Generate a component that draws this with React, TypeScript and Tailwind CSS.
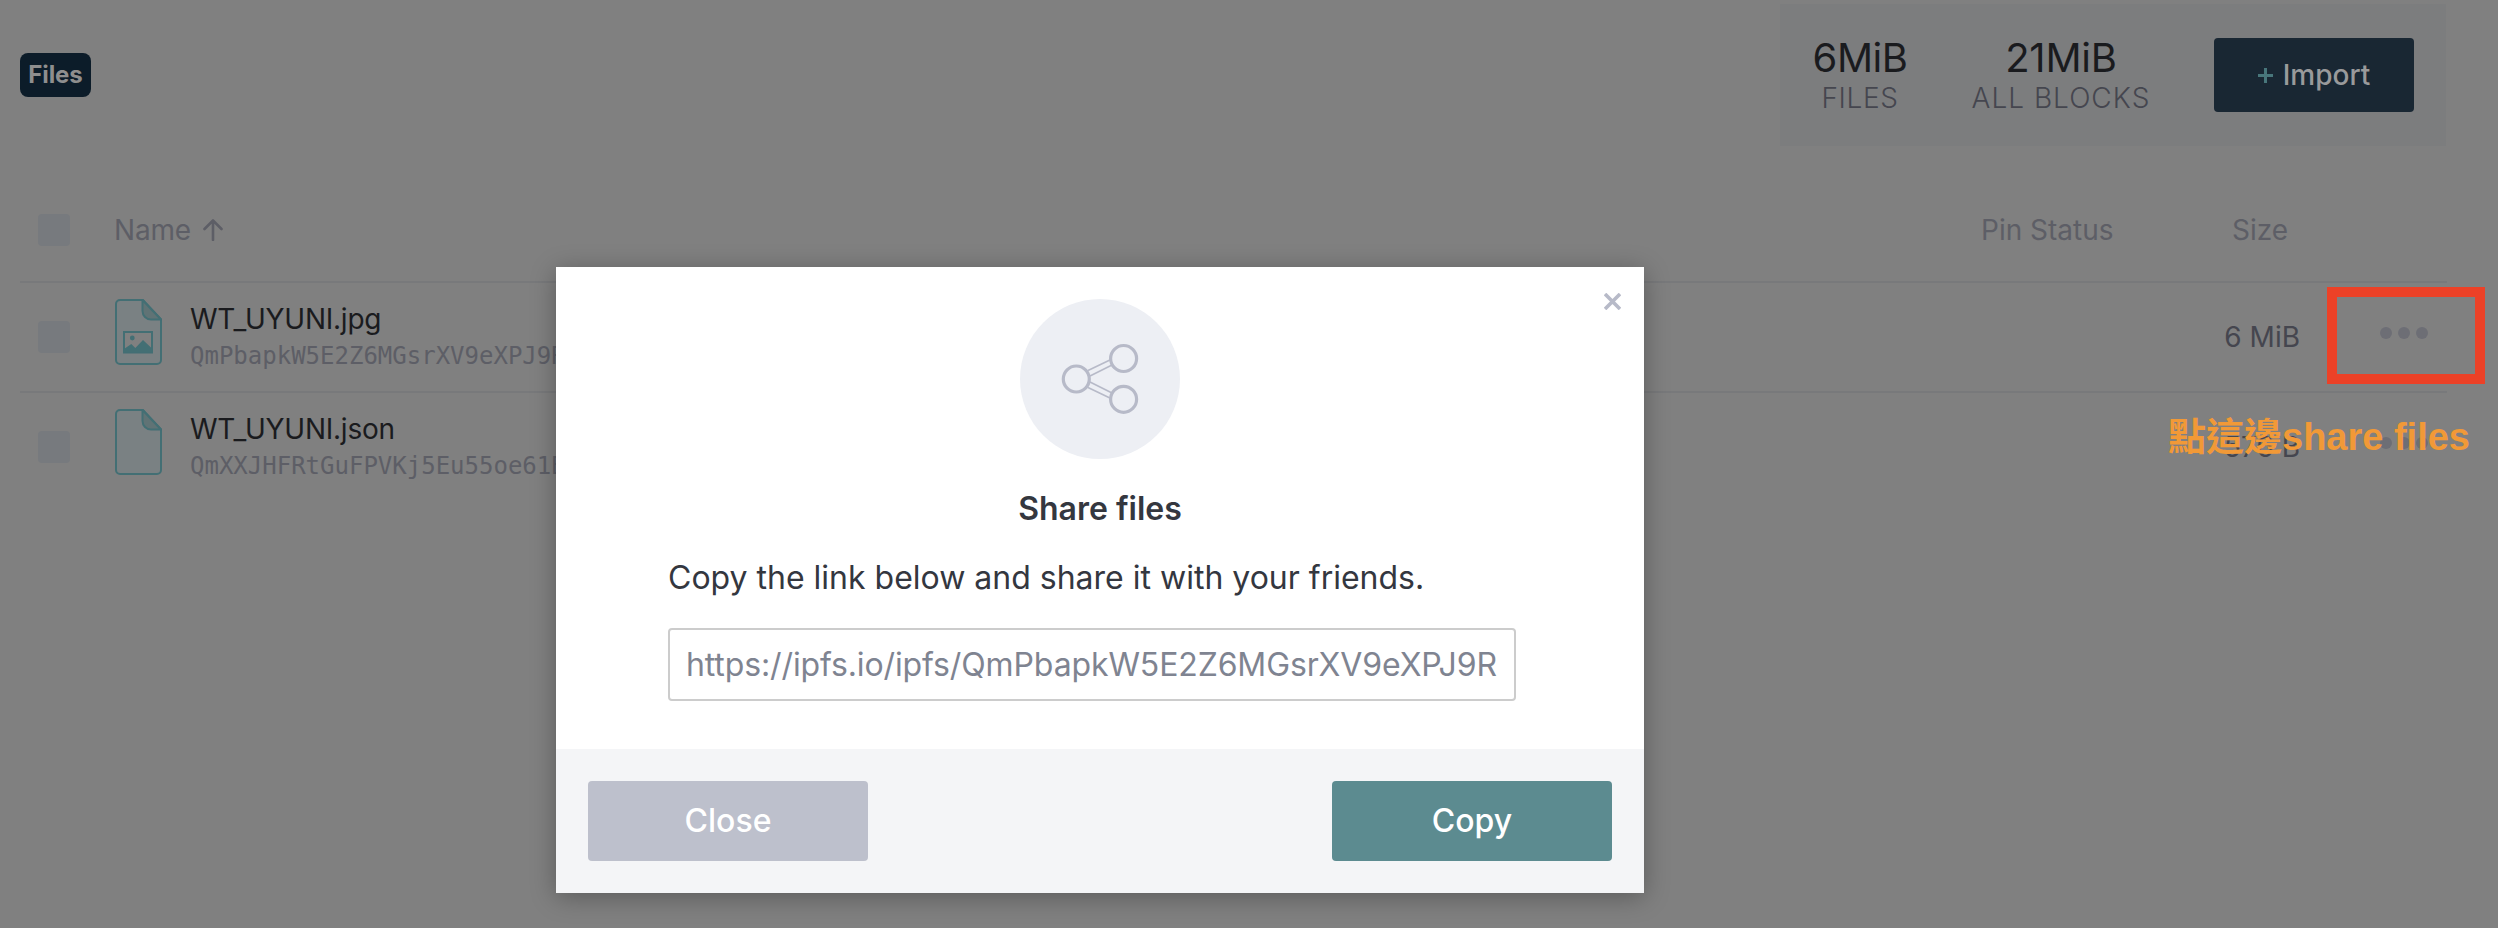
import React from "react";

const rows = [
  { name: "WT_UYUNI.jpg", cid: "QmPbapkW5E2Z6MGsrXV9eXPJ9R", size: "6 MiB", image: true },
  { name: "WT_UYUNI.json", cid: "QmXXJHFRtGuFPVKj5Eu55oe61B", size: "576 B", image: false },
];

function Checkbox() {
  return <span className="h-8 w-8 rounded-[4px] bg-[#777a7e]" />;
}

function FileIcon({ image }: { image: boolean }) {
  return (
    <svg className="h-[66px] w-[47px]" viewBox="0 0 47 66" fill="none">
      <path d="M28 1H5a4 4 0 0 0-4 4v56a4 4 0 0 0 4 4h37a4 4 0 0 0 4-4V20.500Z" fill="#7a8183" stroke="#436f74" strokeWidth="2" />
      <path d="M27.500 1v11a8.500 8.500 0 0 0 8.500 8.500h10Z" fill="#607375" stroke="#436f74" strokeWidth="2" strokeLinejoin="round" />
      {image && (
        <g>
          <rect x="9" y="33" width="28" height="20.500" stroke="#436f74" strokeWidth="2" fill="#808080" />
          <circle cx="17.300" cy="39" r="2.400" fill="#436f74" />
          <path d="M9 53.500V50l7.300-5 4 4L28 41l9 8.500v4Z" fill="#436f74" />
        </g>
      )}
    </svg>
  );
}

function Dots() {
  return (
    <svg className="h-3 w-12" viewBox="0 0 48 12" fill="#6d6e75">
      <circle cx="6" cy="6" r="6" />
      <circle cx="24" cy="6" r="6" />
      <circle cx="42" cy="6" r="6" />
    </svg>
  );
}

function ShareIcon() {
  return (
    <svg className="h-20 w-20" viewBox="0 0 80 80" fill="none" stroke="#b7bac8">
      <g strokeWidth="1.600">
        <path d="M28 31.500 52 20M30 37 54 25M30 43 54 55M28 48.500 52 60" />
      </g>
      <g strokeWidth="3.200" fill="#edeff4">
        <circle cx="16.300" cy="40" r="13" />
        <circle cx="63.600" cy="19.500" r="13" />
        <circle cx="63.600" cy="60.300" r="13" />
      </g>
    </svg>
  );
}

export default function App() {
  return (
    <div className="relative h-[928px] w-[2498px] overflow-hidden bg-[#808080] font-['Inter',sans-serif] text-[28px]">
      <header className="flex h-[146px] items-start justify-between pt-1 pr-[52px] pl-5">
        <div className="mt-[49px] flex h-11 w-[71px] items-center justify-center rounded-lg bg-[#0c1c29] text-2xl font-bold tracking-[-0.1px] text-[#8e8e8e]">
          Files
        </div>
        <div className="flex h-[142px] w-[666px] bg-[#7c7d7e]">
          <div className="flex w-[160px] flex-col items-center pt-[30px]">
            <span className="h-12 text-[40px] leading-[48px] tracking-[-0.5px] text-[#1a1b1e]">6MiB</span>
            <span className="leading-8 font-light tracking-[0.6px] text-[#45464f]">FILES</span>
          </div>
          <div className="flex w-[242px] flex-col items-center pt-[30px]">
            <span className="h-12 text-[40px] leading-[48px] tracking-[-0.2px] text-[#1a1b1e]">21MiB</span>
            <span className="leading-8 font-light tracking-[1px] text-[#45464f]">ALL BLOCKS</span>
          </div>
          <button className="mt-[34px] ml-8 flex h-[74px] w-[200px] items-center justify-center gap-2.5 rounded-[4px] bg-[#192733] font-medium text-[#999a9b]">
            <svg className="h-[15px] w-[15px]" viewBox="0 0 15 15" stroke="#48767b" strokeWidth="3">
              <path d="M7.500 0v15M0 7.500h15" />
            </svg>
            Import
          </button>
        </div>
      </header>

      <main className="px-5 pr-[51px]">
        <div className="flex h-[135px] items-center pt-[33px] pl-[18px] whitespace-nowrap text-[#5d5e66]">
          <Checkbox />
          <span className="ml-11 tracking-[-0.2px]">Name</span>
          <svg className="ml-3 h-[22px] w-5" viewBox="0 0 20 22" fill="none" stroke="#5d5e66" strokeWidth="2.600" strokeLinecap="round" strokeLinejoin="round">
            <path d="M10 21V1.500M1.500 10 10 1.500l8.500 8.500" />
          </svg>
          <span className="ml-auto w-[134px]">Pin Status</span>
          <span className="mr-[157px] ml-[117px] w-[58px]">Size</span>
        </div>
        {rows.map((row) => (
          <div key={row.name} className="flex h-[110px] items-center border-t-2 border-[#78797b] pl-[18px]">
            <Checkbox />
            <div className="ml-[45px] flex h-[76px] items-start">
              <FileIcon image={row.image} />
            </div>
            <div className="ml-7 flex flex-col pt-0.5">
              <span className="h-9 leading-9 tracking-[-0.25px] text-[#1a1b1e]">{row.name}</span>
              <span className="h-[38px] font-['DejaVu_Sans_Mono',monospace] text-2xl leading-[38px] text-[#5d5e66]">{row.cid}</span>
            </div>
            <span className="ml-auto text-[#45464f]">{row.size}</span>
            <span className="mr-[19px] ml-20 -mt-2">
              <Dots />
            </span>
          </div>
        ))}
      </main>

      <div className="absolute top-[287px] left-[2327px] h-[97px] w-[158px] border-[10px] border-[#ec4127]" />
      <div className="absolute top-[411px] left-[2168px] font-['Liberation_Sans','Noto_Sans_CJK_TC',sans-serif] text-[38px] leading-[52px] font-bold whitespace-nowrap text-[#f19937]">
        點這邊share files
      </div>

      <section className="absolute top-[267px] left-[556px] flex h-[626px] w-[1088px] flex-col bg-white text-[32px] text-[#34373f] shadow-[0_4px_24px_rgba(0,0,0,0.3)]">
        <div className="flex h-[482px] flex-col items-center pt-8">
          <div className="flex h-40 w-40 items-center justify-center rounded-full bg-[#edeff4]">
            <ShareIcon />
          </div>
          <h2 className="mt-[30px] leading-10 font-semibold">Share files</h2>
          <div className="mt-[29px] flex w-[864px] flex-col">
            <p className="leading-10">Copy the link below and share it with your friends.</p>
            <div className="mt-[30px] flex h-[73px] w-[848px] items-center overflow-hidden rounded-[4px] border-2 border-[#cccccc] px-4 tracking-[-0.12px] whitespace-nowrap text-[#7f8491]">
              https://ipfs.io/ipfs/QmPbapkW5E2Z6MGsrXV9eXPJ9R
            </div>
          </div>
        </div>
        <footer className="flex h-[144px] items-center justify-between bg-[#f4f5f7] px-8 font-medium text-white">
          <button className="h-20 w-[280px] rounded-[4px] bg-[#bdc0cc]">Close</button>
          <button className="h-20 w-[280px] rounded-[4px] bg-[#5c8b90]">Copy</button>
        </footer>
        <svg className="absolute top-[26px] right-[23px] h-[17px] w-[17px]" viewBox="0 0 17 17" stroke="#b7bac8" strokeWidth="3.600">
          <path d="m1 1 15 15M16 1 1 16" />
        </svg>
      </section>
    </div>
  );
}
